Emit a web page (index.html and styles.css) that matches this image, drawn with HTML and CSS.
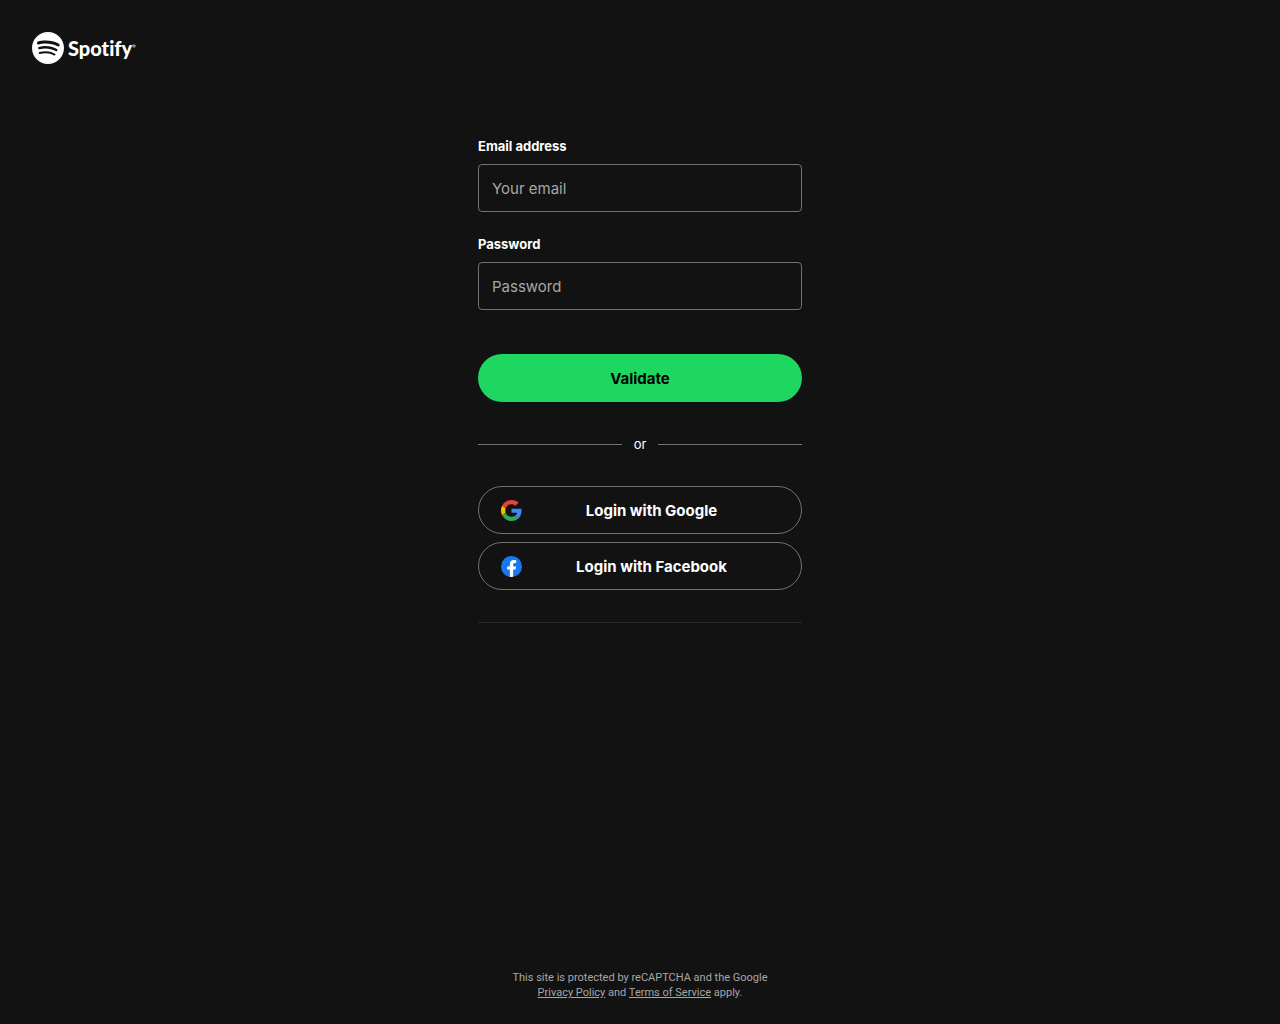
FILE: index.html
```html
<!DOCTYPE html>
<html lang="en">
<head>
  <meta charset="UTF-8">
  <meta name="viewport" content="width=device-width, initial-scale=1.0">
  <title>Login - Spotify</title>
  <link rel="stylesheet" href="styles.css">
</head>
<body>

<header class="header">
  <a href="#" class="logo">
    <svg class="logo-mark" viewBox="0 0 24 24" fill="currentColor" aria-hidden="true">
      <path d="M12 0C5.4 0 0 5.4 0 12s5.4 12 12 12 12-5.4 12-12S18.66 0 12 0zm5.521 17.34c-.24.359-.66.48-1.021.24-2.82-1.74-6.36-2.101-10.561-1.141-.418.122-.779-.179-.899-.539-.12-.421.18-.78.54-.9 4.56-1.021 8.52-.6 11.64 1.32.42.18.479.659.301 1.02zm1.44-3.3c-.301.42-.841.6-1.262.3-3.239-1.98-8.159-2.58-11.939-1.38-.479.12-1.02-.12-1.14-.6-.12-.48.12-1.021.6-1.141C9.6 9.9 15 10.561 18.72 12.84c.361.181.54.78.241 1.2zm.12-3.36C15.24 8.4 8.82 8.16 5.16 9.301c-.6.179-1.2-.181-1.38-.721-.18-.601.18-1.2.72-1.381 4.26-1.26 11.28-1.02 15.721 1.621.539.3.719 1.02.419 1.56-.299.421-1.02.599-1.559.3z"/>
    </svg>
    <span class="logo-text">Spotify</span>
    <svg class="logo-reg" viewBox="0 0 4 4" aria-hidden="true"><circle cx="2" cy="2" r="1.2" fill="none" stroke="currentColor" stroke-width=".7"/></svg>
  </a>
</header>

<main class="main">
  <form class="login-form" onsubmit="return false">
    <div class="field">
      <label for="email">Email address</label>
      <input type="email" id="email" placeholder="Your email">
    </div>
    <div class="field">
      <label for="password">Password</label>
      <input type="password" id="password" placeholder="Password">
    </div>
    <button type="submit" class="btn btn-primary">Validate</button>
  </form>

  <div class="divider">or</div>

  <div class="social">
    <button type="button" class="btn btn-social">
      <svg class="btn-icon" viewBox="0 0 48 48" aria-hidden="true">
        <path fill="#EA4335" d="M24 9.5c3.54 0 6.71 1.22 9.21 3.6l6.85-6.85C35.9 2.38 30.47 0 24 0 14.62 0 6.51 5.38 2.56 13.22l7.98 6.19C12.43 13.72 17.74 9.5 24 9.5z"/>
        <path fill="#4285F4" d="M46.98 24.55c0-1.57-.15-3.09-.38-4.55H24v9.02h12.94c-.58 2.96-2.26 5.48-4.78 7.18l7.73 6c4.51-4.18 7.09-10.36 7.09-17.65z"/>
        <path fill="#FBBC05" d="M10.53 28.59c-.48-1.45-.76-2.99-.76-4.59s.27-3.14.76-4.59l-7.98-6.19C.92 16.46 0 20.12 0 24c0 3.88.92 7.54 2.56 10.78l7.97-6.19z"/>
        <path fill="#34A853" d="M24 48c6.48 0 11.93-2.13 15.89-5.81l-7.73-6c-2.15 1.45-4.92 2.3-8.16 2.3-6.26 0-11.57-4.22-13.47-9.91l-7.98 6.19C6.51 42.62 14.62 48 24 48z"/>
      </svg>
      <span>Login with Google</span>
    </button>
    <button type="button" class="btn btn-social">
      <svg class="btn-icon" viewBox="0 0 24 24" aria-hidden="true">
        <circle cx="12" cy="12" r="12" fill="#1877F2"/>
        <path fill="#fff" d="M16.671 15.469 17.203 12h-3.328V9.75c0-.95.465-1.875 1.956-1.875h1.513V4.922s-1.374-.235-2.686-.235c-2.741 0-4.533 1.662-4.533 4.669V12H7.078v3.469h3.047v8.385a12.1 12.1 0 0 0 3.75 0v-8.385z"/>
      </svg>
      <span>Login with Facebook</span>
    </button>
  </div>

  <hr class="line">
</main>

<footer class="footer">
  This site is protected by reCAPTCHA and the Google
  <a href="#">Privacy Policy</a> and <a href="#">Terms of Service</a> apply.
</footer>

</body>
</html>
```

FILE: styles.css
```css
* {
  box-sizing: border-box;
}

body {
  margin: 0;
  min-height: 100vh;
  display: flex;
  flex-direction: column;
  background-color: #121212;
  color: #fff;
  font-family: Inter, Arial, sans-serif;
  font-size: 14px;
}

.header {
  display: flex;
  padding: 32px;
}

.logo {
  display: flex;
  align-items: center;
  height: 32px;
  color: #fff;
  text-decoration: none;
}

.logo-mark {
  width: 32px;
  height: 32px;
  margin-right: 4px;
}

.logo-text {
  font-family: Lato, sans-serif;
  font-size: 20px;
  font-weight: 900;
  font-variant-ligatures: none;
  line-height: 32px;
}

.logo-reg {
  width: 4px;
  height: 4px;
  margin-bottom: 4px;
}

.main {
  width: 100%;
  max-width: 324px;
  margin: 0 auto;
  padding-top: 40px;
}

.field {
  margin-bottom: 22px;
}

.field label {
  display: block;
  margin-bottom: 8px;
  font-size: 13px;
  font-weight: bold;
  line-height: 20px;
}

.field input {
  display: block;
  width: 100%;
  height: 48px;
  padding: 0 13px;
  background-color: #121212;
  border: 1px solid #727272;
  border-radius: 4px;
  color: #fff;
  font-family: inherit;
  font-size: 15px;
}

.field input::placeholder {
  color: #a7a7a7;
}

.btn {
  width: 100%;
  height: 48px;
  border-radius: 24px;
  font-family: inherit;
  font-size: 15px;
  font-weight: bold;
  cursor: pointer;
}

.btn-primary {
  margin-top: 22px;
  background-color: #1ed760;
  border: none;
  color: #000;
}

.divider {
  display: flex;
  align-items: center;
  gap: 12px;
  margin: 32px 0;
  font-size: 13px;
  line-height: 20px;
}

.divider::before,
.divider::after {
  content: "";
  flex: 1;
  height: 1px;
  background-color: #727272;
}

.social {
  display: flex;
  flex-direction: column;
  gap: 8px;
}

.btn-social {
  display: flex;
  align-items: center;
  padding: 0 20px 0 22px;
  background-color: transparent;
  border: 1px solid #727272;
  color: #fff;
}

.btn-social span {
  flex: 1;
}

.btn-icon {
  width: 21px;
  height: 21px;
}

.line {
  width: 100%;
  margin: 32px 0 0;
  border: none;
  border-top: 1px solid #292929;
}

.footer {
  width: 100%;
  max-width: 324px;
  margin: auto auto 0;
  padding: 24px;
  color: #a7a7a7;
  font-family: Roboto, Arial, sans-serif;
  font-size: 11px;
  line-height: 15px;
  text-align: center;
}

.footer a {
  color: inherit;
}
```
